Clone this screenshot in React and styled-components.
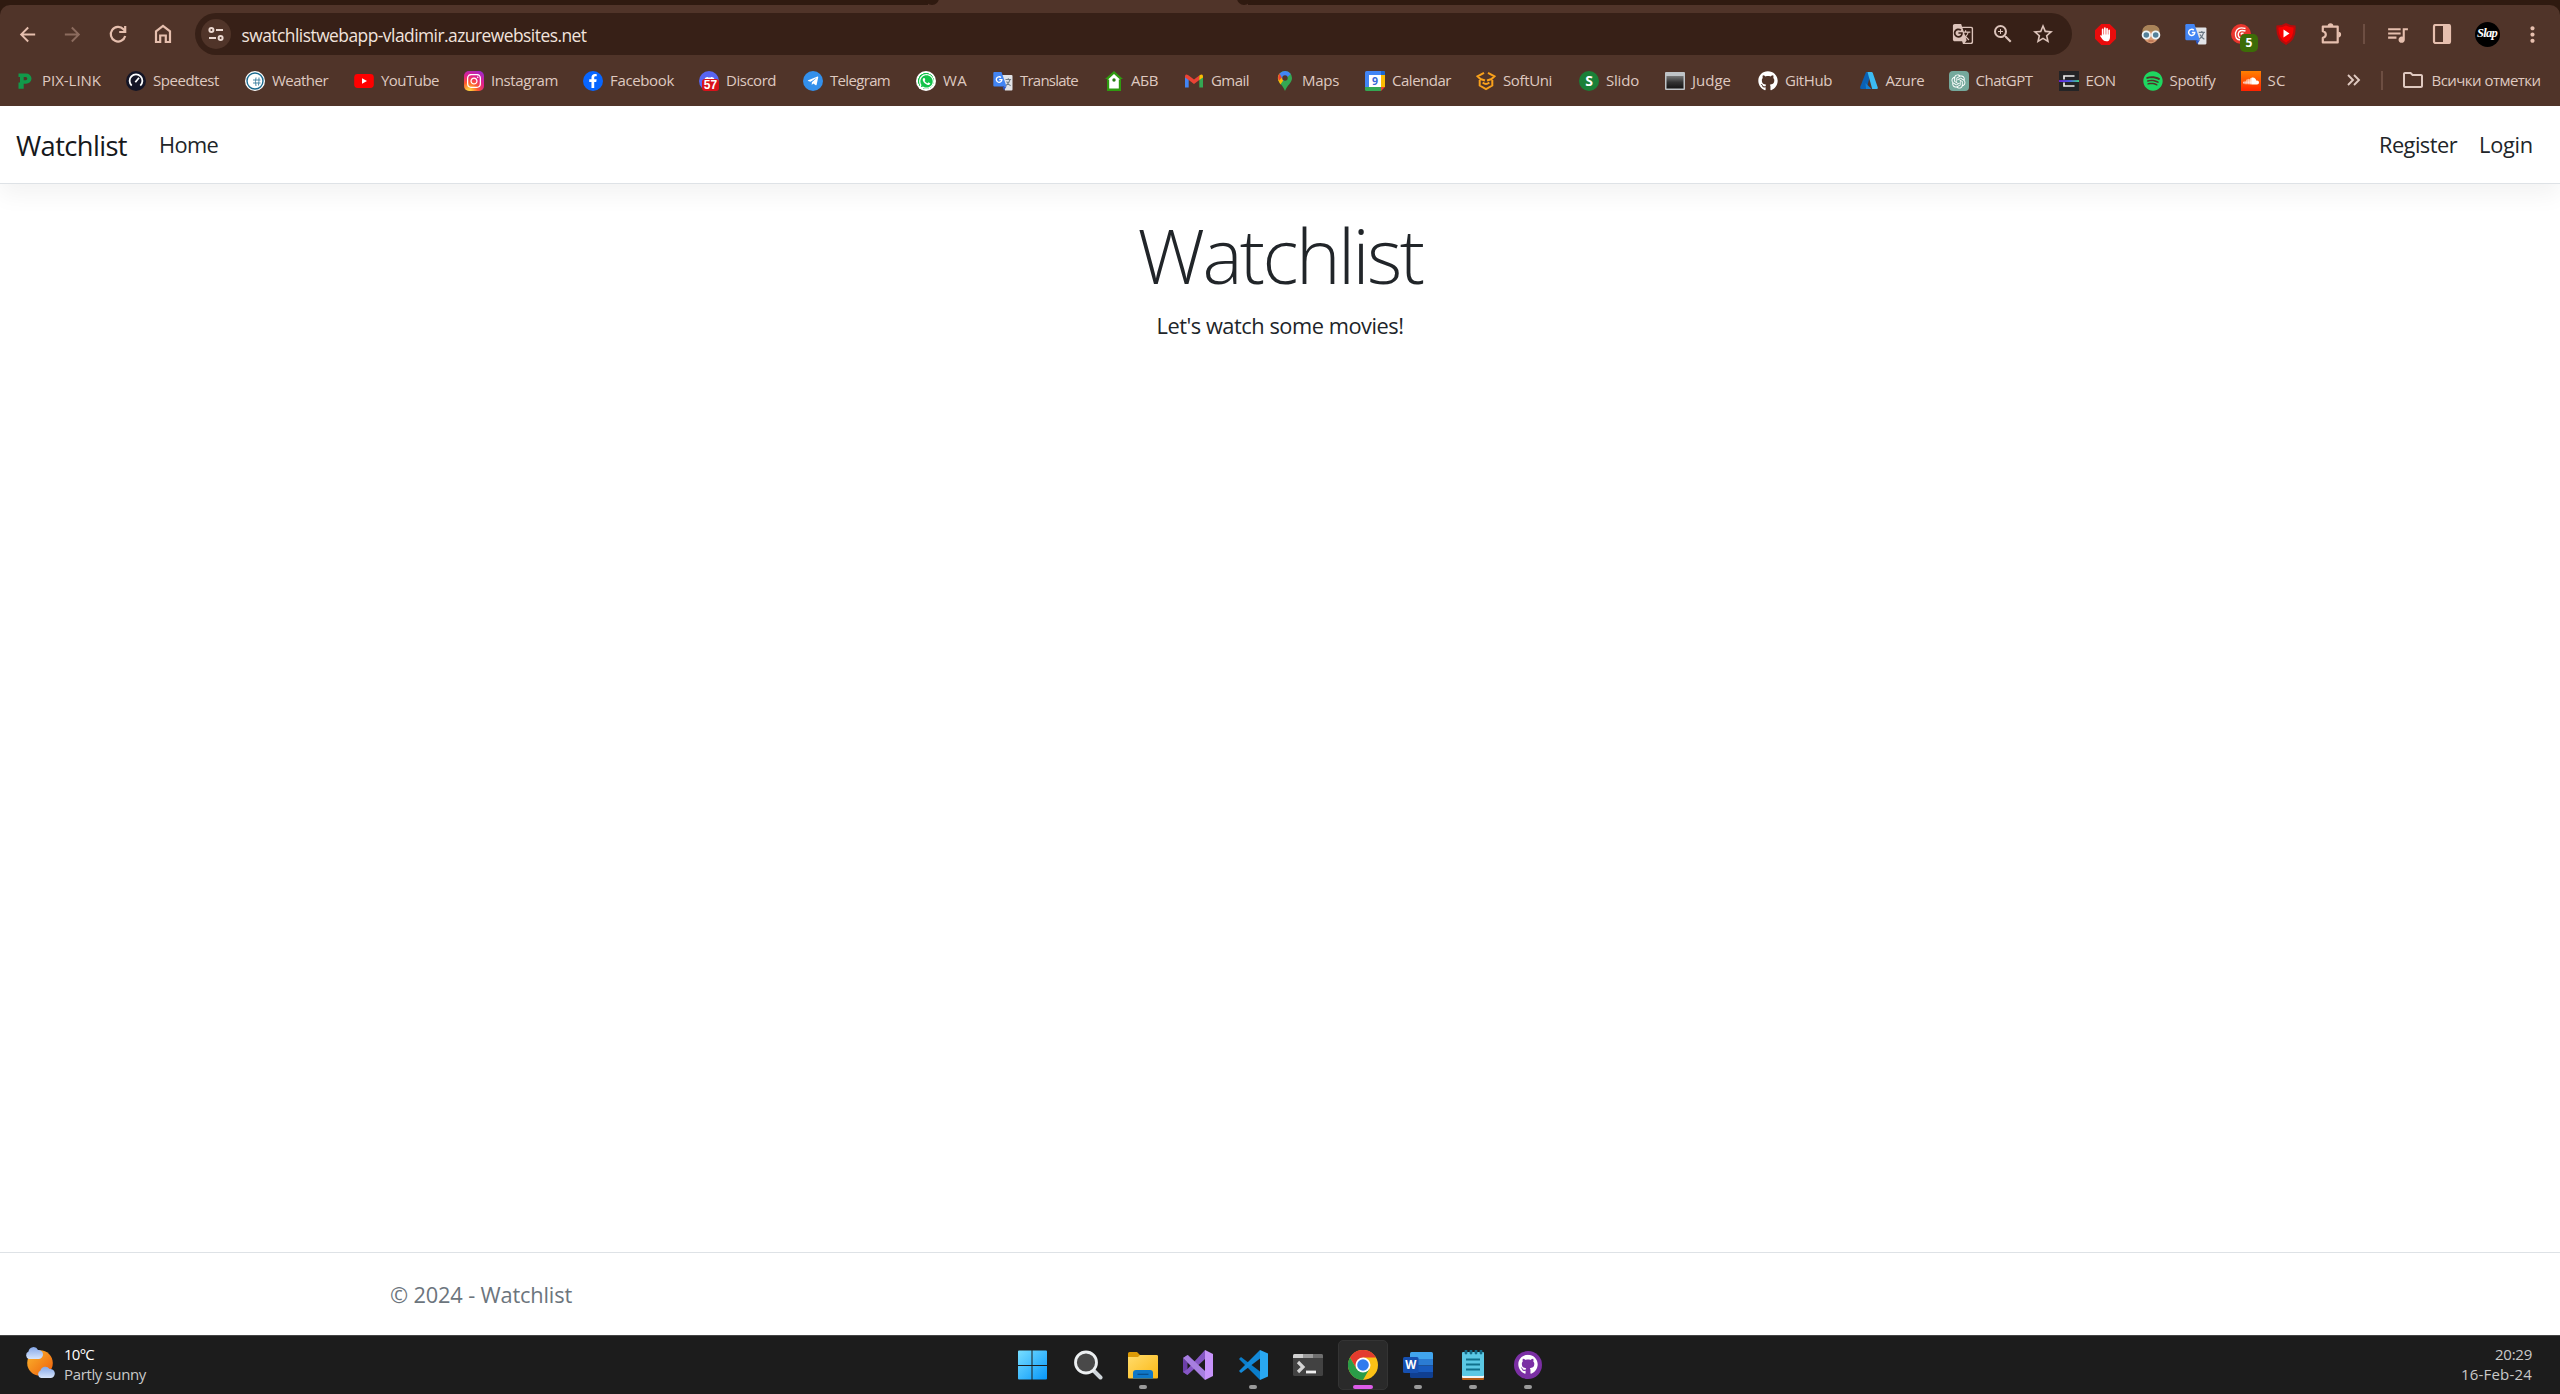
import React, { useLayoutEffect, useRef, useState } from "react";
import styled, { createGlobalStyle } from "styled-components";
import {
  MdArrowBack, MdArrowForward, MdGTranslate, MdZoomIn,
  MdStarBorder, MdQueueMusic, MdMoreVert, MdOutlineFolder,
} from "react-icons/md";
import {
  FaInstagram, FaFacebookF, FaWhatsapp, FaTelegramPlane, FaGithub, FaSpotify,
  FaSoundcloud, FaDiscord,
} from "react-icons/fa";
import { RiOpenaiFill } from "react-icons/ri";

const Global = createGlobalStyle`
  * { box-sizing: border-box; }
  html, body { margin: 0; padding: 0; background: #fff; overflow: hidden; }
  body { font-family: "Open Sans", "Noto Sans", sans-serif; }
  svg { display: block; flex: none; }
`;

const Screen = styled.div`
  width: 2560px;
  height: 1394px;
  display: flex;
  flex-direction: column;
  overflow: hidden;
`;

/* Text whose tracking is adjusted so that it spans the given width. */
const TextSpan = styled.span`
  display: inline-block;
  white-space: nowrap;
  flex: none;
`;
function Text({ width, children }) {
  const ref = useRef(null);
  const [spacing, setSpacing] = useState(0);
  useLayoutEffect(() => {
    const natural = ref.current.getBoundingClientRect().width;
    setSpacing((width - natural) / children.length);
  }, [width, children]);
  return <TextSpan ref={ref} style={{ letterSpacing: spacing }}>{children}</TextSpan>;
}

/* ---------- browser chrome ---------- */
const TabStrip = styled.div`
  height: 15px;
  margin-bottom: -10px;
  background: #2f1a10;
  display: flex;
`;
const ActiveTab = styled.div`
  margin-left: 928px;
  width: 320px;
  height: 6px;
  background: #503429;
  position: relative;
  &::before, &::after {
    content: "";
    position: absolute;
    bottom: 1px;
    width: 14px;
    height: 14px;
    border-radius: 50%;
    background: #2f1a10;
  }
  &::before { left: -3px; }
  &::after { right: -3px; }
`;
const Chrome = styled.div`
  height: 101px;
  flex: none;
  background: #503429;
  border-radius: 10px 10px 0 0;
  position: relative;
`;
const Toolbar = styled.div`
  height: 58px;
  display: flex;
  align-items: center;
  padding-left: 5px;
  color: #e6bfae;
`;
const IconButton = styled.div`
  width: ${(p) => p.$w || 45}px;
  height: 40px;
  display: flex;
  align-items: center;
  justify-content: center;
  flex: none;
  position: relative;
  opacity: ${(p) => (p.$dim ? 0.4 : 1)};
`;
const Omnibox = styled.div`
  margin-left: 10px;
  width: 1877px;
  height: 42px;
  border-radius: 21px;
  background: #372017;
  display: flex;
  align-items: center;
  padding: 0 9px 0 6px;
  color: #dcc3ba;
  flex: none;
`;
const SiteInfo = styled.div`
  width: 30px;
  height: 30px;
  border-radius: 50%;
  background: #503429;
  display: flex;
  align-items: center;
  justify-content: center;
  color: #ecd9d1;
`;
const Url = styled.div`
  flex: 1;
  margin-left: 10.5px;
  padding-top: 1px;
  font-size: 17.4px;
  line-height: 40px;
  color: #f2e4de;
`;
const Extensions = styled.div`
  display: flex;
  align-items: center;
  margin-left: 11px;
`;
const Separator = styled.div`
  width: 2px;
  height: ${(p) => p.$h}px;
  background: #6d4e42;
  flex: none;
  margin: ${(p) => p.$m || 0};
`;
const Badge = styled.div`
  position: absolute;
  left: 22px;
  top: 20px;
  width: 18px;
  height: 18px;
  border-radius: 5px;
  background: #3c6c07;
  color: #fff;
  font: 700 12px/18px "Open Sans", sans-serif;
  text-align: center;
`;
const Avatar = styled.div`
  width: 25px;
  height: 25px;
  border-radius: 50%;
  background: #000;
  color: #fff;
  font: italic 700 12.5px/22px "Liberation Serif", serif;
  text-align: center;
  letter-spacing: -0.7px;
`;
const Bookmarks = styled.div`
  height: 34px;
  display: flex;
  align-items: center;
  padding-left: 15px;
  color: #dfc9c0;
  font-size: 15px;
  line-height: 34px;
`;
const Bookmark = styled.div`
  width: ${(p) => p.$w}px;
  flex: none;
  display: flex;
  align-items: center;
  gap: 7px;
  & > svg, & > i { position: relative; top: 1px; }
`;
const Tile = styled.i`
  width: 20px;
  height: 20px;
  flex: none;
  display: flex;
  align-items: center;
  justify-content: center;
  border-radius: ${(p) => p.$r || 0};
  background: ${(p) => p.$bg || "none"};
  color: #fff;
  font: normal 700 14px/20px "Open Sans", sans-serif;
  position: relative;
`;
const CountBadge = styled.span`
  position: absolute;
  left: 3px;
  top: 8px;
  width: 17px;
  height: 12px;
  border-radius: 3px;
  background: #d9121a;
  color: #fff;
  font: 700 12px/12px "Liberation Sans", sans-serif;
  text-align: center;
`;

const ReloadIcon = () => (
  <svg width="24" height="24" viewBox="0 0 24 24" fill="none" stroke="currentColor" strokeWidth="2.2">
    <path d="M19.2 14A7.300 7.300 0 1 1 17.500 7.300l1.700 1.800" /><path d="M19.200 4v6h-6" />
  </svg>
);
const HomeIcon = () => (
  <svg width="24" height="24" viewBox="0 0 24 24" fill="none" stroke="currentColor" strokeWidth="2.200">
    <path d="M5 9.300 12 3.800l7 5.500v10.700h-4.200v-6.500H9.200V20H5z" />
  </svg>
);
const PuzzleIcon = () => (
  <svg width="24" height="24" viewBox="0 0 24 24">
    <path d="M3.800 4.600h14.900V20.400H3.800v-4.600q3-.8 3-3.300t-3-3.300z" fill="none" stroke="currentColor" strokeWidth="2.200" strokeLinejoin="round" />
    <path d="M8.700 4a2.800 2.800 0 0 1 5.600 0zM19.300 9.800a2.800 2.800 0 0 1 0 5.600z" fill="currentColor" />
  </svg>
);
const TuneIcon = () => (
  <svg width="18" height="18" viewBox="0 0 18 18" fill="none" stroke="currentColor" strokeWidth="2">
    <circle cx="4.4" cy="5" r="2" /><path d="M9 5h7M2 13h7" /><circle cx="13.6" cy="13" r="2" />
  </svg>
);
const TranslateIcon = ({ size = 20 }) => (
  <svg width={size} height={size} viewBox="0 0 20 20">
    <path d="M9 4h9.5q1 0 1 1v13.5q0 1-1 1H12z" fill="#e2e4e8" />
    <path d="M1.3 1h7.2l5 14.6H1.3q-1 0-1-1V2q0-1 1-1z" fill="#4285f4" />
    <path d="M9.5 15.6h4L11 19.6z" fill="#2a56c6" />
    <path d="M8 6.5a2.8 2.8 0 1 0 .9 2.2H6.2" fill="none" stroke="#fff" strokeWidth="1.3" />
    <path d="M12.5 8.5h5.6M15.3 7.2v1.3M17 8.5q-1 4-4 6M13.6 10.5q1.5 3 4 4.3" fill="none" stroke="#6d7a86" strokeWidth="1.1" />
  </svg>
);
const YouTubeIcon = () => (
  <svg width="20" height="20" viewBox="0 0 20 20"><rect x="0.2" y="3" width="19.6" height="14" rx="3.4" fill="#f00" /><path d="M8 7.2 13 10l-5 2.8z" fill="#fff" /></svg>
);
const SpeedIcon = () => (
  <svg width="20" height="20" viewBox="0 0 20 20"><circle cx="10" cy="10" r="10" fill="#141526" /><path d="M5.7 14.6a6.4 6.4 0 1 1 8.6 0" fill="none" stroke="#fff" strokeWidth="1.8" /><path d="m9.3 11.3 3.7-4.6" stroke="#fff" strokeWidth="1.8" /></svg>
);
const WeatherGlobe = () => (
  <svg width="20" height="20" viewBox="0 0 20 20"><circle cx="10" cy="10" r="10" fill="#fff" /><circle cx="10" cy="10" r="8" fill="none" stroke="#1b6a8e" strokeWidth="1.4" /><path d="M8 9h7.500M8 12h7.500M11 6.500q-1 4 0 8.500M14 6.500q0 4-.5 8" fill="none" stroke="#4a88a6" strokeWidth="1" /></svg>
);
const PixIcon = () => (
  <svg width="20" height="20" viewBox="0 0 20 20"><path fillRule="evenodd" d="M3.500 2.500H11a5.400 5 0 0 1 0 10.200H8.700v5.100H3.500V11.500h1.500V6H3.500zM8.700 6v3.200h2a1.600 1.600 0 0 0 0-3.200z" fill="#12994a" /></svg>
);
const AbvIcon = () => (
  <svg width="20" height="20" viewBox="0 0 20 20"><path d="M10 0 19 8h-2v12H3V8H1z" fill="#2f9a10" /><path d="m10 3 6 5.500h-1.200V17.500H5.200V8.500H4z" fill="#fff" /><circle cx="10" cy="9" r="1.700" fill="#277a14" /></svg>
);
const GmailIcon = () => (
  <svg width="20" height="20" viewBox="0 0 20 20"><path d="M1 5v11.500h3.700V7z" fill="#4285f4" /><path d="M15.300 7v9.500H19V5z" fill="#34a853" /><path d="M1 5.500Q1 2 4.700 4.400L10 8.500l5.300-4.100V9L10 13 4.700 9 1 6.500z" fill="#ea4335" /><path d="M15.300 4.400Q19 2 19 5.500v1L15.300 9z" fill="#fbbc04" /></svg>
);
const MapsIcon = () => (
  <svg width="20" height="20" viewBox="0 0 20 20"><path d="M10 0a7 7 0 0 1 7 7c0 5-5 7-7 13C8 14 3 12 3 7a7 7 0 0 1 7-7z" fill="#34a853" /><path d="M3.300 9.500A7 7 0 0 1 4.600 2.600L10 7l-4.600 6.500z" fill="#fbbc04" /><path d="M4.600 2.600 8 5.300 4 9.700Q2 6 4.600 2.600z" fill="#ea4335" /><path d="M4.600 2.600A7 7 0 0 1 15.700 3L8.500 10z" fill="#4285f4" /><circle cx="10" cy="7" r="2.700" fill="#533529" /></svg>
);
const CalendarIcon = () => (
  <svg width="20" height="20" viewBox="0 0 20 20"><path d="M0 1.500Q0 0 1.500 0H18.500Q20 0 20 1.500V4H0z" fill="#4285f4" /><path d="M0 4h4v12H0z" fill="#4285f4" /><path d="M16 4h4v12h-4z" fill="#fbbc04" /><path d="M16 0h2.500Q20 0 20 1.500V4h-4z" fill="#1967d2" /><path d="M0 16h16v4H1.500Q0 20 0 18.500z" fill="#34a853" /><path d="M16 16h4l-4 4z" fill="#ea4335" /><path d="M4 4h12v12H4z" fill="#fff" /><text x="10" y="14" textAnchor="middle" fontFamily="Open Sans, sans-serif" fontWeight="700" fontSize="10.500" fill="#3367d6">9</text></svg>
);
const SoftUniIcon = () => (
  <svg width="20" height="20" viewBox="0 0 20 20" fill="none" stroke="#f9a11b" strokeWidth="2"><path d="M8 1.800 1.500 5.300 4.500 8l4.500 1.500M12 1.800l6.500 3.500-3 2.700-4.500 1.500M3.700 9v5.500l6.300 3.500 6.300-3.500V9M6.700 11.500q3.300 3 6.600 0" /></svg>
);
const JudgeIcon = () => (
  <svg width="20" height="20" viewBox="0 0 20 20"><defs><linearGradient id="jg" x1="0" y1="0" x2="0" y2="1"><stop stopColor="#777" /><stop offset=".5" stopColor="#333" /><stop offset="1" stopColor="#151515" /></linearGradient></defs><rect y="1" width="20" height="18" rx="1" fill="#bfc3c6" /><rect x="1.500" y="5" width="17" height="12.500" fill="url(#jg)" /></svg>
);
const AzureIcon = () => (
  <svg width="20" height="20" viewBox="0 0 20 20"><path d="M7 1h5L7.500 18H2.500Q.5 18 1.200 16z" fill="#0a61b5" /><path d="M8.500 1h4q1 0 1.300 1l5 14.500q.4 1.500-1.300 1.500h-4.300z" fill="#3cbcf2" /><path d="m6.500 12 6 6H7z" fill="#1380d4" /></svg>
);
const EonIcon = () => (
  <svg width="20" height="20" viewBox="0 0 20 20"><defs><linearGradient id="eg"><stop stopColor="#6a1ed8" /><stop offset=".5" stopColor="#4c5be8" /><stop offset="1" stopColor="#41d38a" /></linearGradient></defs><rect width="20" height="20" fill="#242426" /><path d="M15.500 5H5v3.500M5 11.500V15h10.500" fill="none" stroke="#eee" strokeWidth="1.700" /><path d="M0 9.100h20v1.900H0z" fill="url(#eg)" /></svg>
);
const FaceIcon = () => (
  <svg width="20" height="24" viewBox="0 0 20 24"><path d="M2 12V9.500Q2 3 10 3t8 6.500V13q-1 7-8 8.500-7-1.500-8-8.500z" fill="#d99a72" /><path d="M1.500 12Q0 3 10 3t8.500 9L14 9.500H6z" fill="#a88358" /><circle cx="5.300" cy="13" r="3.700" fill="#54819a" stroke="#eef5f8" strokeWidth="1.800" /><circle cx="14.700" cy="13" r="3.700" fill="#54819a" stroke="#eef5f8" strokeWidth="1.800" /><path d="M7.500 19h5" stroke="#b06547" strokeWidth="1.200" /></svg>
);
const SpiralIcon = () => (
  <svg width="20" height="20" viewBox="0 0 20 20"><circle cx="10" cy="10" r="10" fill="#e8352c" /><path d="M14.500 4.500Q6 2 4.500 9q-.5 7 5 7M14.500 7Q8 5 7.200 10q0 4 3.500 4M12.500 9.500q-2-1-2.500 1" fill="none" stroke="#fff" strokeWidth="1.400" /></svg>
);
const ShieldIcon = () => (
  <svg width="22" height="22" viewBox="0 0 22 22"><path d="M11 0q4 2.500 9.500 2.500Q22 17 11 22 0 17 1.500 2.500 7 2.500 11 0z" fill="#b80b0b" /><path d="M11 2.500q3.500 2 7.500 2Q19 15.500 11 19.500 3 15.500 3.500 4.500q4 0 7.500-2z" fill="#f70000" /><path d="m8.500 6.500 6 4-6 4z" fill="#fff" /></svg>
);
const StopHand = () => (
  <svg width="21" height="21" viewBox="0 0 20 20">
    <path d="M6 0h8l6 6v8l-6 6H6l-6-6V6z" fill="#e90c0c" />
    <path d="M7.300 5.200V11M9.400 4V11M11.500 4.500V11M13.500 6v6" stroke="#fff" strokeWidth="1.600" strokeLinecap="round" />
    <path d="M6.500 10h7.800v2.500q0 4-3.700 4-2.300 0-3.600-2L4.700 11.300q.6-1.200 1.800-.2z" fill="#fff" />
  </svg>
);
const PanelIcon = () => (
  <svg width="20" height="20" viewBox="0 0 20 20"><rect x="2" y="1" width="16" height="18" rx="1.500" fill="none" stroke="currentColor" strokeWidth="2.200" /><path d="M11 1h7v18h-7z" fill="currentColor" /></svg>
);
const ChevronsIcon = () => (
  <svg width="14" height="12" viewBox="0 0 14 12" fill="none" stroke="currentColor" strokeWidth="1.900"><path d="m1 1 5 5-5 5M7 1l5 5-5 5" /></svg>
);

const bookmarks = [
  ["PIX-LINK", 111, 59, <PixIcon />],
  ["Speedtest", 119, 66, <SpeedIcon />],
  ["Weather", 109, 56, <WeatherGlobe />],
  ["YouTube", 110, 58, <YouTubeIcon />],
  ["Instagram", 119, 67, <Tile $r="5px" $bg="radial-gradient(circle at 25% 100%, #ffc83a 8%, #fc5a2c 35%, #e1208c 62%, #8a2be0 100%)"><FaInstagram size={16} /></Tile>],
  ["Facebook", 116, 64, <Tile $r="50%" $bg="#0866ff"><FaFacebookF size={14} /></Tile>],
  ["Discord", 104, 50, <Tile $r="50%" $bg="#5865f2"><FaDiscord size={13} /><CountBadge>57</CountBadge></Tile>],
  ["Telegram", 113, 60, <Tile $r="50%" $bg="#3390ec"><FaTelegramPlane size={12} /></Tile>],
  ["WA", 77, 24, <Tile $r="50%" $bg="radial-gradient(circle, #12c34a 55%, #fff 58%)"><FaWhatsapp size={17} /></Tile>],
  ["Translate", 111, 58, <TranslateIcon />],
  ["АБВ", 80, 27, <AbvIcon />],
  ["Gmail", 91, 38, <GmailIcon />],
  ["Maps", 90, 37, <MapsIcon />],
  ["Calendar", 111, 59, <CalendarIcon />],
  ["SoftUni", 103, 49, <SoftUniIcon />],
  ["Slido", 86, 33, <Tile $r="50%" $bg="#1a8038">S</Tile>],
  ["Judge", 93, 39, <JudgeIcon />],
  ["GitHub", 100.5, 47, <FaGithub size={20} color="#fff" />],
  ["Azure", 90, 39, <AzureIcon />],
  ["ChatGPT", 110, 57, <Tile $r="4px" $bg="#75a99c"><RiOpenaiFill size={17} /></Tile>],
  ["EON", 84, 30, <EonIcon />],
  ["Spotify", 98, 46, <FaSpotify size={20} color="#1ed760" />],
  ["SC", 106, 18, <Tile $bg="linear-gradient(#ff8000, #ff2200)"><FaSoundcloud size={16} /></Tile>],
];

function Browser() {
  return (
    <>
      <TabStrip><ActiveTab /></TabStrip>
      <Chrome>
        <Toolbar>
          <IconButton><MdArrowBack size={23} /></IconButton>
          <IconButton $dim><MdArrowForward size={23} /></IconButton>
          <IconButton><ReloadIcon /></IconButton>
          <IconButton><HomeIcon /></IconButton>
          <Omnibox>
            <SiteInfo><TuneIcon /></SiteInfo>
            <Url><Text width={345}>swatchlistwebapp-vladimir.azurewebsites.net</Text></Url>
            <IconButton $w={40}><MdGTranslate size={22} /></IconButton>
            <IconButton $w={40}><MdZoomIn size={24} /></IconButton>
            <IconButton $w={40}><MdStarBorder size={24} /></IconButton>
          </Omnibox>
          <Extensions>
            <IconButton><StopHand /></IconButton>
            <IconButton><FaceIcon /></IconButton>
            <IconButton><TranslateIcon size={22} /></IconButton>
            <IconButton><SpiralIcon /><Badge>5</Badge></IconButton>
            <IconButton><ShieldIcon /></IconButton>
            <IconButton><PuzzleIcon /></IconButton>
            <Separator $h={20} $m="0 9.500px 0 10px" />
            <IconButton><MdQueueMusic size={25} /></IconButton>
            <IconButton><PanelIcon /></IconButton>
            <IconButton><Avatar>Slap</Avatar></IconButton>
            <IconButton><MdMoreVert size={25} /></IconButton>
          </Extensions>
        </Toolbar>
        <Bookmarks>
          {bookmarks.map(([name, w, tw, icon]) => (
            <Bookmark key={name} $w={w}>{icon}<Text width={tw}>{name}</Text></Bookmark>
          ))}
          <ChevronsIcon />
          <Separator $h={19} $m="0 18px 0 20px" />
          <MdOutlineFolder size={24} />
          <Bookmark $w={118}><span /><Text width={109}>Всички отметки</Text></Bookmark>
        </Bookmarks>
      </Chrome>
    </>
  );
}

/* ---------- web page ---------- */
const Page = styled.div`
  flex: 1;
  display: flex;
  flex-direction: column;
  background: #fff;
  color: #212529;
`;
const Navbar = styled.nav`
  height: 78px;
  border-bottom: 1px solid #dee2e6;
  box-shadow: 0 11px 22px rgba(0, 0, 0, 0.05);
  display: flex;
  align-items: center;
  padding: 0 27px 0 16px;
  font-size: 21.8px;
  line-height: 40px;
`;
const Brand = styled.div`
  font-size: 27.3px;
  line-height: 42px;
  padding-top: 2px;
  color: #16181b;
  margin-right: 32px;
`;
const NavLinks = styled.div`
  display: flex;
  gap: 22px;
  margin-left: ${(p) => (p.$end ? "auto" : 0)};
`;
const Main = styled.main`
  flex: 1;
  display: flex;
  flex-direction: column;
  align-items: center;
  padding-top: 25px;
`;
const Title = styled.h1`
  margin: 0;
  font-weight: 300;
  font-size: 75.600px;
  line-height: 92px;
`;
const Lead = styled.p`
  margin: 8px 0 0;
  font-size: 21.800px;
  line-height: 34px;
`;
const Footer = styled.footer`
  height: 83px;
  border-top: 1px solid #dee2e6;
  padding-left: 390px;
  color: #6c757d;
  font-size: 21.800px;
  line-height: 84px;
`;

/* ---------- taskbar ---------- */
const Taskbar = styled.div`
  height: 59px;
  flex: none;
  background: #1c1c1c;
  border-top: 1px solid #444;
  display: grid;
  grid-template-columns: 1fr 550px 1fr;
  font-size: 15px;
  line-height: 20px;
  color: #c9c9c9;
`;
const Weather = styled.div`
  display: flex;
  padding: 8px 0 0 24px;
  gap: 9px;
`;
const Lines = styled.div`
  display: flex;
  flex-direction: column;
  align-items: ${(p) => (p.$right ? "flex-end" : "flex-start")};
  padding: ${(p) => (p.$right ? "8px 28px 0 0" : 0)};
`;
const Bright = styled.span`
  color: #fff;
`;
const Apps = styled.div`
  display: flex;
`;
const AppSlot = styled.div`
  width: 55px;
  height: 58px;
  display: flex;
  align-items: center;
  justify-content: center;
  position: relative;
`;
const AppTile = styled.div`
  width: 50px;
  height: 50px;
  border-radius: 5px;
  display: flex;
  align-items: center;
  justify-content: center;
  background: ${(p) => (p.$on ? "#2a2a2a" : "none")};
  border: 1px solid ${(p) => (p.$on ? "#343434" : "transparent")};
`;
const Indicator = styled.div`
  position: absolute;
  bottom: 5px;
  left: 50%;
  transform: translateX(-50%);
  width: ${(p) => (p.$on ? 20 : 8)}px;
  height: 4px;
  border-radius: 2px;
  background: ${(p) => (p.$on ? "#dc5ce8" : "#9a9a9a")};
`;

const I = ({ children, shift = 0 }) => <svg width="30" height="30" viewBox={`${shift} 0 30 30`}>{children}</svg>;
const WeatherIcon = () => (
  <svg width="31" height="36" viewBox="0 0 31 36">
    <defs>
      <linearGradient id="sun" x1="0" y1="0" x2="1" y2="1"><stop stopColor="#fbb82e" /><stop offset="1" stopColor="#ee5d0b" /></linearGradient>
      <linearGradient id="cl" x1="0" y1="0" x2="0" y2="1"><stop stopColor="#86a8e8" /><stop offset="1" stopColor="#d6e4fb" /></linearGradient>
    </defs>
    <circle cx="16" cy="19" r="12.800" fill="url(#sun)" />
    <path d="M5 15a4 4 0 0 1-.5-7.500A5 5 0 0 1 14 6a4.500 4.500 0 0 1 1 9z" fill="url(#cl)" />
    <path d="M17 34a4 4 0 0 1-.5-7.500 5 5 0 0 1 9-1.500 4.500 4.500 0 0 1 1.500 9z" fill="url(#cl)" />
  </svg>
);
const StartIcon = () => (
  <I shift={1}><defs><linearGradient id="st" gradientUnits="userSpaceOnUse" x1="0" y1="0" x2="29" y2="30"><stop stopColor="#7be0ff" /><stop offset="1" stopColor="#0797fb" /></linearGradient></defs><path d="M1 1.500Q1 .5 2 .5h12.500V15H1zM15.500 .5h13.500q1 0 1 1V15H15.500zM1 16h13.500v13.500H2q-1 0-1-1zM15.500 16H30v12.500q0 1-1 1H15.500z" fill="url(#st)" /></I>
);
const SearchIcon = () => (
  <I><path d="m20 20 7.500 7.500" stroke="#cfd5da" strokeWidth="4" strokeLinecap="round" /><circle cx="13" cy="12.500" r="10.500" fill="#494949" stroke="#eceff1" strokeWidth="2.800" /></I>
);
const FolderIcon = () => (
  <I><defs><linearGradient id="fo" x1="0" y1="0" x2="1" y2="1"><stop stopColor="#ffdc6c" /><stop offset="1" stopColor="#fcb814" /></linearGradient></defs><path d="M0 3.500Q0 2 1.500 2H9l3 3h16.500Q30 5 30 6.500V12H0z" fill="#dc9a06" /><path d="M0 7h10l2-2h16.500Q30 5 30 6.500V27.500q0 1-1 1H1q-1 0-1-1z" fill="url(#fo)" /><path d="M5 28.500V23q0-3 3-3h14q3 0 3 3v5.500z" fill="#0f78c8" /><path d="M9.500 24.300h11" stroke="#0a4c86" strokeWidth="1.200" /></I>
);
const VsIcon = () => (
  <I><path d="M0 8 5 5l17 17v4l-2 1zM0 8v14l4.500 3v-17z" fill="#6c3fa8" /><path d="M4.500 25 0 22l4.500-3L22 0v9z" fill="#8556c4" /><path d="m0 8 4.500-3L22 21v9z" fill="#a77fe0" /><path d="m22 0 8 4v22l-8 4z" fill="#c793fa" /></I>
);
const CodeIcon = () => (
  <I><path d="m1 9 2-2 19 14.500V30z" fill="#0a7dca" /><path d="m1 21 2 2L22 8.500V0z" fill="#1389d8" /><path d="m22 0 8 3.500v23L22 30z" fill="#29a8f2" /></I>
);
const TerminalIcon = () => (
  <I><rect y="4" width="30" height="22" rx="1.500" fill="#424242" /><path d="M0 8V5.500Q0 4 1.500 4H10v4z" fill="#d0d0d0" /><path d="M10 4h10v4H10z" fill="#9c9c9c" /><path d="M20 4h8.500Q30 4 30 5.500V8H20z" fill="#6f6f6f" /><path d="m5 12 5 5-5 5" fill="none" stroke="#d4d4d4" strokeWidth="3.200" /><path d="M13 22h10" stroke="#f0f0f0" strokeWidth="2.800" /></I>
);
const ChromeIcon = () => (
  <I><circle cx="15" cy="15" r="15" fill="#fbc116" /><path d="M2 7.500A15 15 0 0 1 28 7.500H15L8.500 18.800z" fill="#e33b2e" /><path d="M2 7.500A15 15 0 0 0 15 30l6.500-11.200-6.500 2.500-6.500-2.500z" fill="#2a9c48" /><circle cx="15" cy="15" r="7.500" fill="#fff" /><circle cx="15" cy="15" r="5.800" fill="#2f7bee" /></I>
);
const WordIcon = () => (
  <I><path d="M7 3.500Q7 2 8.500 2h20Q30 2 30 3.500V9H7z" fill="#41a5ee" /><path d="M7 9h23v6.500H7z" fill="#2b7cd3" /><path d="M7 15.500h23V22H7z" fill="#185abd" /><path d="M7 22h23v4.500q0 1.500-1.500 1.500h-20Q7 28 7 26.500z" fill="#103f91" /><rect y="7" width="15.500" height="16" rx="1.500" fill="#1650b0" /><text x="7.700" y="19" textAnchor="middle" fontFamily="Open Sans, sans-serif" fontWeight="700" fontSize="11.500" fill="#fff">W</text></I>
);
const NotepadIcon = () => (
  <I><rect x="4" y="4" width="22" height="26" rx="1" fill="#b25b15" /><rect x="4" y="3" width="22" height="25" rx="1" fill="#f4f4f4" /><rect x="4" y="2" width="22" height="24" rx="1" fill="#5bc8e4" /><path d="M8 9.500h14M8 14.500h14M8 19.500h14" stroke="#10708c" strokeWidth="2" /><path d="M8 1v2M13 1v2M18 1v2M23 1v2" stroke="#146a86" strokeWidth="2.800" strokeLinecap="round" /></I>
);
const DesktopIcon = () => (
  <I><circle cx="15" cy="15" r="14" fill="#7b2fa4" /><g transform="translate(5 4.500)"><FaGithub size={20} color="#fff" /></g></I>
);
const apps = [
  [StartIcon, false], [SearchIcon, false], [FolderIcon, true], [VsIcon, false], [CodeIcon, true],
  [TerminalIcon, false], [ChromeIcon, true, true], [WordIcon, true], [NotepadIcon, true], [DesktopIcon, true],
];

export default function App() {
  return (
    <Screen>
      <Global />
      <Browser />
      <Page>
        <Navbar>
          <Brand><Text width={111}>Watchlist</Text></Brand>
          <NavLinks><Text width={59}>Home</Text></NavLinks>
          <NavLinks $end><Text width={78}>Register</Text><Text width={54}>Login</Text></NavLinks>
        </Navbar>
        <Main>
          <Title><Text width={285}>Watchlist</Text></Title>
          <Lead><Text width={247}>Let's watch some movies!</Text></Lead>
        </Main>
        <Footer><Text width={182}>© 2024 - Watchlist</Text></Footer>
      </Page>
      <Taskbar>
        <Weather>
          <WeatherIcon />
          <Lines><Bright><Text width={30}>10°C</Text></Bright><Text width={82}>Partly sunny</Text></Lines>
        </Weather>
        <Apps>
          {apps.map(([Icon, running, on], i) => (
            <AppSlot key={i}><AppTile $on={on}><Icon /></AppTile>{running && <Indicator $on={on} />}</AppSlot>
          ))}
        </Apps>
        <Lines $right><Text width={37}>20:29</Text><Text width={71}>16-Feb-24</Text></Lines>
      </Taskbar>
    </Screen>
  );
}
